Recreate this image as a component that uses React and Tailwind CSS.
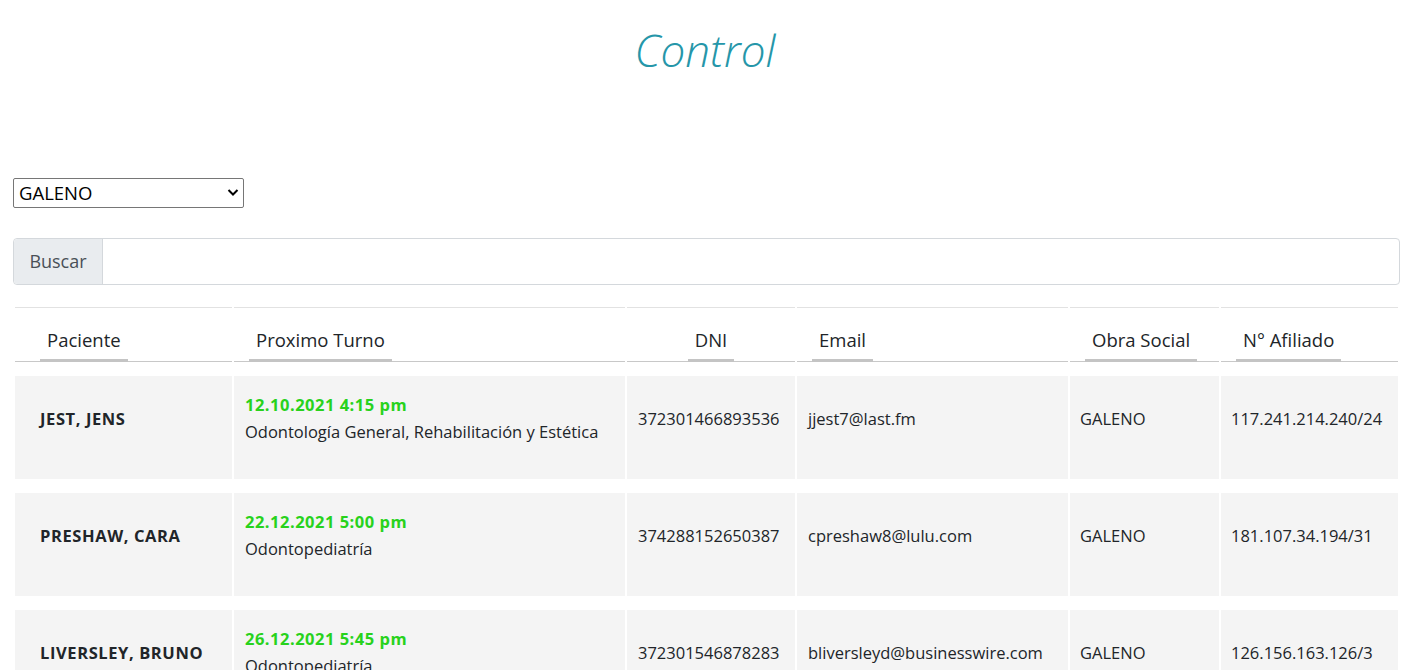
import { useState } from 'react'

const pacientes = [
  {
    id: 1,
    nombre: 'JEST, JENS',
    turno: '12.10.2021 4:15 pm',
    especialidad: 'Odontología General, Rehabilitación y Estética',
    dni: '372301466893536',
    email: 'jjest7@last.fm',
    obraSocial: 'GALENO',
    afiliado: '117.241.214.240/24',
  },
  {
    id: 2,
    nombre: 'PRESHAW, CARA',
    turno: '22.12.2021 5:00 pm',
    especialidad: 'Odontopediatría',
    dni: '374288152650387',
    email: 'cpreshaw8@lulu.com',
    obraSocial: 'GALENO',
    afiliado: '181.107.34.194/31',
  },
  {
    id: 3,
    nombre: 'LIVERSLEY, BRUNO',
    turno: '26.12.2021 5:45 pm',
    especialidad: 'Odontopediatría',
    dni: '372301546878283',
    email: 'bliversleyd@businesswire.com',
    obraSocial: 'GALENO',
    afiliado: '126.156.163.126/3',
  },
]

function HeaderCell({ children, align = 'left', pad = 'pl-[25px]' }) {
  return (
    <th
      className={`border-t border-b border-t-[#e2e2e2] border-b-[#c8c8c8] align-bottom p-0 pt-[17px] font-normal ${
        align === 'center' ? 'text-center' : `text-left ${pad}`
      }`}
    >
      <span className="inline-block px-[7px] pb-[6px] text-[18.5px] leading-[27px] text-[#212529] border-b-[3px] border-[#c4c4c4] -mb-px">
        {children}
      </span>
    </th>
  )
}

export default function App() {
  const [obra, setObra] = useState('GALENO')
  const [busqueda, setBusqueda] = useState('')

  // solo pacientes de la obra social elegida
  const filtrados = pacientes.filter(
    (p) =>
      p.obraSocial === obra &&
      (p.nombre.toLowerCase().includes(busqueda.toLowerCase()) ||
        p.dni.includes(busqueda))
  )

  return (
    <div className="min-h-screen bg-white font-['Open_Sans',sans-serif] text-[#212529]">
      <h1 className="pt-[22px] text-center text-[44px] leading-[56px] font-light italic text-[#2596a9]">
        Control
      </h1>

      <div className="pl-[13px] pr-[10px] pt-[100px]">
        {/* filtro por obra social */}
        <div className="relative w-[231px]">
          <select
            value={obra}
            onChange={(e) => setObra(e.target.value)}
            className="appearance-none w-full h-[30px] border border-[#767676] rounded-[2px] bg-white pl-[5px] text-[18.5px] leading-[28px] text-black outline-none"
          >
            <option>GALENO</option>
            <option>OSDE</option>
            <option>SWISS MEDICAL</option>
          </select>
          <svg
            className="absolute right-[5px] top-[10px] pointer-events-none"
            width="12"
            height="9"
            viewBox="0 0 12 9"
          >
            <path d="M1.5 2 L6 6.5 L10.5 2" fill="none" stroke="#000" strokeWidth="2" />
          </svg>
        </div>

        {/* buscador */}
        <div className="mt-[30px] flex h-[47px] rounded-[4px] border border-[#d4d8dc]">
          <span className="flex items-center w-[89px] justify-center bg-[#e9ecef] border-r border-[#d4d8dc] rounded-l-[4px] text-[18px] text-[#495057]">
            Buscar
          </span>
          <input
            value={busqueda}
            onChange={(e) => setBusqueda(e.target.value)}
            className="flex-1 px-3 text-[16px] outline-none rounded-r-[4px]"
          />
        </div>

        <table className="mt-[8px] w-full table-fixed border-separate border-spacing-x-[2px] border-spacing-y-[14px]">
          <colgroup>
            <col className="w-[217px]" />
            <col className="w-[391px]" />
            <col className="w-[168px]" />
            <col className="w-[271px]" />
            <col className="w-[149px]" />
            <col className="w-[177px]" />
          </colgroup>
          <thead>
            <tr className="h-[55px]">
              <HeaderCell>Paciente</HeaderCell>
              <HeaderCell pad="pl-[15px]">Proximo Turno</HeaderCell>
              <HeaderCell align="center">DNI</HeaderCell>
              <HeaderCell pad="pl-[15px]">Email</HeaderCell>
              <HeaderCell pad="pl-[15px]">Obra Social</HeaderCell>
              <HeaderCell pad="pl-[15px]">N° Afiliado</HeaderCell>
            </tr>
          </thead>
          <tbody>
            {filtrados.map((p) => (
              <tr key={p.id} className="h-[103px] bg-[#f4f4f4] text-[16.5px] leading-[27px]">
                <td className="pl-[25px] pt-[15px] pb-[34px] font-bold tracking-[0.6px] align-middle">{p.nombre}</td>
                <td className="pl-[11px] pt-[15px] pb-[34px] align-middle">
                  <div className="font-bold tracking-[0.5px] text-[#28d21c]">{p.turno}</div>
                  <div className="whitespace-nowrap">{p.especialidad}</div>
                </td>
                <td className="pl-[11px] pt-[15px] pb-[34px] align-middle">{p.dni}</td>
                <td className="pl-[11px] pt-[15px] pb-[34px] align-middle whitespace-nowrap">{p.email}</td>
                <td className="pl-[10px] pt-[15px] pb-[34px] align-middle">{p.obraSocial}</td>
                <td className="pl-[10px] pt-[15px] pb-[34px] align-middle">{p.afiliado}</td>
              </tr>
            ))}
          </tbody>
        </table>
      </div>
    </div>
  )
}
